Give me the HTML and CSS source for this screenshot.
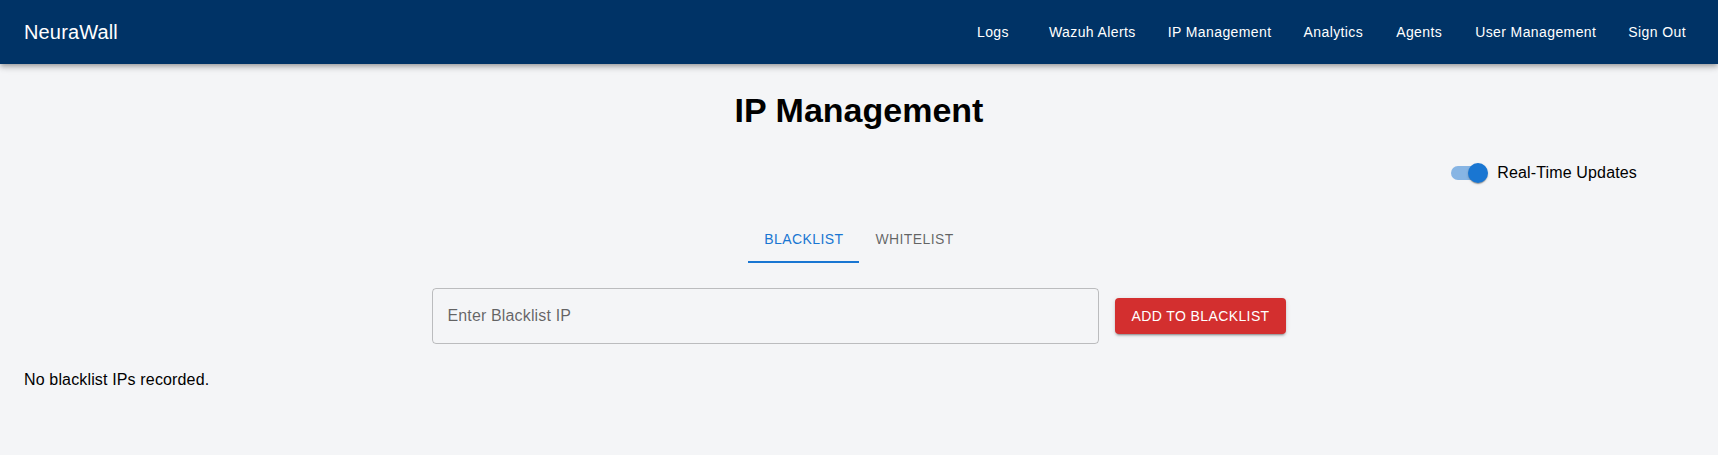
FILE: index.html
```html
<!DOCTYPE html>
<html lang="en">
<head>
<meta charset="utf-8">
<title>NeuraWall - IP Management</title>
<link rel="stylesheet" href="styles.css">
</head>
<body>
<header class="appbar">
  <div class="brand">NeuraWall</div>
  <nav class="nav">
    <a class="nav-btn">Logs</a>
    <a class="nav-btn">Wazuh Alerts</a>
    <a class="nav-btn">IP Management</a>
    <a class="nav-btn">Analytics</a>
    <a class="nav-btn">Agents</a>
    <a class="nav-btn">User Management</a>
    <a class="nav-btn">Sign Out</a>
  </nav>
</header>
<main class="main">
  <h1 class="title">IP Management</h1>
  <div class="toggle-row">
    <label class="toggle">
      <span class="switch">
        <span class="track"></span>
        <span class="thumb"></span>
      </span>
      <span class="toggle-label">Real-Time Updates</span>
    </label>
  </div>
  <div class="tabs">
    <div class="tab active">Blacklist</div>
    <div class="tab">Whitelist</div>
  </div>
  <div class="add-row">
    <input class="ip-input" type="text" placeholder="Enter Blacklist IP">
    <button class="add-btn">Add to Blacklist</button>
  </div>
  <p class="empty">No blacklist IPs recorded.</p>
</main>
</body>
</html>
```
FILE: styles.css
```css
* { box-sizing: border-box; }
html, body { margin: 0; padding: 0; }
body {
  background: #f4f5f7;
  font-family: "Liberation Sans", Arial, sans-serif;
  color: #000;
}
.appbar {
  height: 64px;
  background: #003366;
  color: #fff;
  display: flex;
  align-items: center;
  justify-content: space-between;
  padding: 0 24px;
  box-shadow: 0px 2px 4px -1px rgba(0,0,0,0.2), 0px 4px 5px 0px rgba(0,0,0,0.14), 0px 1px 10px 0px rgba(0,0,0,0.12);
  position: relative;
  z-index: 2;
}
.brand {
  font-size: 20px;
  line-height: 1.6;
  letter-spacing: 0.15px;
}
.nav {
  display: flex;
  align-items: center;
  gap: 16px;
}
.nav-btn {
  font-size: 14px;
  font-weight: 400;
  line-height: 1.75;
  letter-spacing: 0.4px;
  min-width: 64px;
  padding: 6px 8px;
  text-align: center;
  color: #fff;
}
.main {
  padding: 25px 24px 0;
}
.title {
  margin: 0;
  text-align: center;
  font-size: 34px;
  line-height: 42px;
  font-weight: 700;
}
.toggle-row {
  display: flex;
  justify-content: flex-end;
  margin-top: 23px;
  padding-right: 41px;
}
.toggle {
  display: inline-flex;
  align-items: center;
  margin-right: 16px;
}
.switch {
  position: relative;
  width: 58px;
  height: 38px;
  display: inline-block;
}
.track {
  position: absolute;
  left: 12px;
  top: 12px;
  width: 34px;
  height: 14px;
  border-radius: 7px;
  background: #1976d2;
  opacity: 0.5;
}
.thumb {
  position: absolute;
  left: 29px;
  top: 9px;
  width: 20px;
  height: 20px;
  border-radius: 50%;
  background: #1976d2;
  box-shadow: 0px 2px 1px -1px rgba(0,0,0,0.2), 0px 1px 1px 0px rgba(0,0,0,0.14), 0px 1px 3px 0px rgba(0,0,0,0.12);
}
.toggle-label {
  font-size: 16px;
  line-height: 1.5;
  letter-spacing: 0.15px;
}
.tabs {
  display: flex;
  justify-content: center;
  margin-top: 23px;
}
.tab {
  font-size: 14px;
  font-weight: 400;
  letter-spacing: 0.4px;
  text-transform: uppercase;
  line-height: 24px;
  min-height: 48px;
  min-width: 90px;
  padding: 12px 16px;
  color: rgba(0,0,0,0.6);
  text-align: center;
}
.tab.active {
  color: #1976d2;
  box-shadow: inset 0 -2px 0 #1976d2;
}
.add-row {
  display: flex;
  justify-content: center;
  align-items: center;
  gap: 16px;
  margin-top: 25px;
}
.ip-input {
  width: 667px;
  height: 56px;
  border: 1px solid rgba(0,0,0,0.23);
  border-radius: 4px;
  background: transparent;
  padding: 16.5px 14px;
  font-family: "Liberation Sans", Arial, sans-serif;
  font-size: 16px;
  letter-spacing: 0.15px;
  color: rgba(0,0,0,0.87);
  outline: none;
}
.ip-input::placeholder {
  color: rgba(0,0,0,0.6);
  opacity: 1;
}
.add-btn {
  font-family: "Liberation Sans", Arial, sans-serif;
  font-size: 14px;
  font-weight: 400;
  letter-spacing: 0.4px;
  text-transform: uppercase;
  line-height: 1.75;
  padding: 6px 16px;
  border: none;
  border-radius: 4px;
  background: #d32f2f;
  color: #fff;
  box-shadow: 0px 3px 1px -2px rgba(0,0,0,0.2), 0px 2px 2px 0px rgba(0,0,0,0.14), 0px 1px 5px 0px rgba(0,0,0,0.12);
}
.empty {
  margin: 27px 0 0;
  font-size: 16px;
  line-height: 18px;
  letter-spacing: 0.15px;
}
```
